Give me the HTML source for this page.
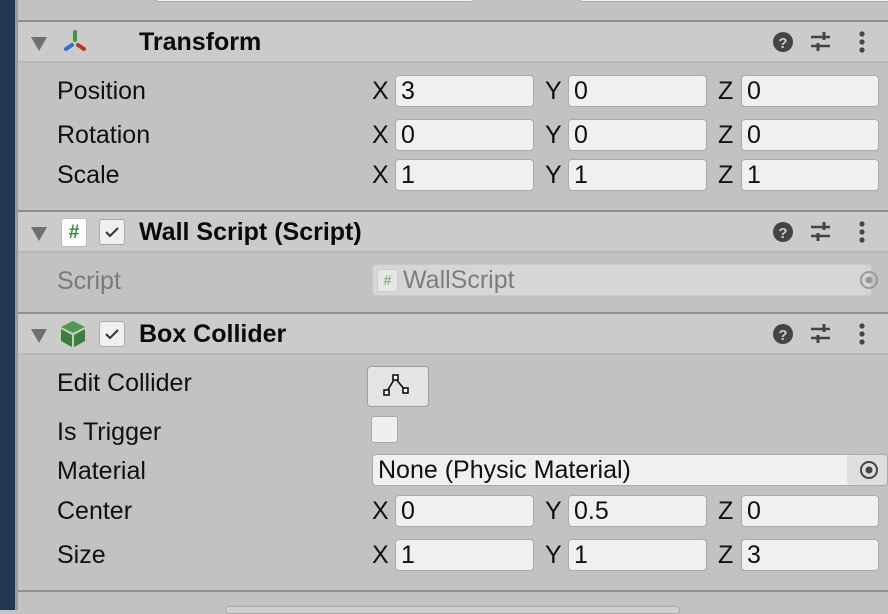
<!DOCTYPE html>
<html><head><meta charset="utf-8"><style>
*{margin:0;padding:0;box-sizing:border-box}
body{width:888px;height:610px;overflow:hidden;background:#c2c2c2;font-family:"Liberation Sans",sans-serif;position:relative;color:#101010}
.a{position:absolute}
.strip{left:0;top:0;width:15px;height:610px;background:#233750}
.edge{left:15px;top:0;width:3px;height:610px;background:#9a9a9a}
.sep{left:18px;width:870px;height:2px;background:#8e8e8e}
.hdr{left:18px;width:870px;height:41px;background:#cbcbcb;border-bottom:2px solid #b7b7b7}
.tri{width:0;height:0;border-left:8px solid transparent;border-right:8px solid transparent;border-top:14px solid #707070}
.ht{font-weight:bold;font-size:25px;color:#0a0a0a}
.lbl{font-size:25px;left:57px}
.ax{font-size:25px}
.f{background:#f0f0f0;border:1px solid #aaa;border-radius:4px;height:32px;font-size:25px;padding:1px 0 0 5px;line-height:29px}
.cb{width:26px;height:26px;background:#efefef;border:1px solid #a9a9a9;border-radius:3px}
</style></head><body>
<div class="a strip"></div><div class="a edge"></div>
<div class="a f" style="left:155px;top:-30px;width:320px"></div>
<div class="a f" style="left:578px;top:-30px;width:320px"></div>
<div class="a sep" style="top:20px"></div>

<div class="a hdr" style="top:22px"></div>
<div class="a tri" style="left:31px;top:37px"></div>
<svg class="a" style="left:60px;top:28px" width="30" height="26"><line x1="15" y1="4" x2="15" y2="12" stroke="#3c9a3c" stroke-width="4" stroke-linecap="round"/><line x1="6" y1="21" x2="12" y2="17" stroke="#2f6fd0" stroke-width="4" stroke-linecap="round"/><line x1="24" y1="21" x2="18" y2="17" stroke="#c2322a" stroke-width="4" stroke-linecap="round"/></svg>
<div class="a ht" style="left:139px;top:28px">Transform</div>

<div class="a lbl" style="top:77px">Position</div>
<div class="a lbl" style="top:121px">Rotation</div>
<div class="a lbl" style="top:161px">Scale</div>

<div class="a sep" style="top:210px"></div>
<div class="a hdr" style="top:212px"></div>
<div class="a tri" style="left:31px;top:227px"></div>
<div class="a" style="left:61px;top:218px;width:26px;height:29px;background:#fff;border:1px solid #bbb;border-radius:3px;color:#3a8a3a;font-weight:bold;font-size:19px;text-align:center;line-height:27px">#</div>
<div class="a cb" style="left:99px;top:219px"></div>
<svg class="a" style="left:99px;top:219px" width="26" height="26"><polyline points="7,13 11,17 19,9" fill="none" stroke="#333" stroke-width="2"/></svg>
<div class="a ht" style="left:139px;top:218px">Wall Script (Script)</div>
<div class="a lbl" style="top:267px;color:#7a7a7a">Script</div>
<div class="a f" style="left:372px;top:264px;width:500px;background:#d6d6d6;border-color:#c8c8c8;color:#7d7d7d;padding-left:30px">WallScript</div>
<div class="a" style="left:377px;top:269px;width:21px;height:23px;background:#e6e6e6;border:1px solid #ccc;border-radius:2px;color:#6fa26f;font-size:14px;text-align:center;line-height:21px">#</div>
<svg class="a" style="left:859px;top:270px" width="20" height="20"><circle cx="10" cy="10" r="8" fill="none" stroke="#999" stroke-width="2"/><circle cx="10" cy="10" r="3.5" fill="#999"/></svg>

<div class="a sep" style="top:312px"></div>
<div class="a hdr" style="top:314px"></div>
<div class="a tri" style="left:31px;top:329px"></div>
<svg class="a" style="left:59px;top:319px" width="28" height="30"><polygon points="14,2 26,8 14,14 2,8" fill="#4f9a4f"/><polygon points="2,10 13,16 13,28 2,22" fill="#3e7d3e"/><polygon points="15,16 26,10 26,22 15,28" fill="#3e7d3e"/></svg>
<div class="a cb" style="left:99px;top:321px"></div>
<svg class="a" style="left:99px;top:321px" width="26" height="26"><polyline points="7,13 11,17 19,9" fill="none" stroke="#333" stroke-width="2"/></svg>
<div class="a ht" style="left:139px;top:320px">Box Collider</div>

<div class="a lbl" style="top:369px">Edit Collider</div>
<div class="a" style="left:367px;top:366px;width:62px;height:41px;background:#e4e4e4;border:1px solid #9e9e9e;border-radius:4px"></div>
<svg class="a" style="left:383px;top:373px" width="30" height="26"><polyline points="3,20 12,5 22,17" fill="none" stroke="#111" stroke-width="1.6"/><rect x="1" y="17" width="5" height="5" fill="#fff" stroke="#111" stroke-width="1.6"/><rect x="10" y="2" width="5" height="5" fill="#fff" stroke="#111" stroke-width="1.6"/><rect x="20" y="15" width="5" height="5" fill="#fff" stroke="#111" stroke-width="1.6"/></svg>
<div class="a lbl" style="top:418px">Is Trigger</div>
<div class="a cb" style="left:371px;top:416px;width:27px;height:27px"></div>
<div class="a lbl" style="top:457px">Material</div>
<div class="a f" style="left:372px;top:454px;width:516px">None (Physic Material)</div>
<div class="a" style="left:847px;top:455px;width:40px;height:30px;background:#dedede;border-radius:3px"></div>
<svg class="a" style="left:859px;top:460px" width="20" height="20"><circle cx="10" cy="10" r="8" fill="none" stroke="#444" stroke-width="2"/><circle cx="10" cy="10" r="3.5" fill="#444"/></svg>
<div class="a lbl" style="top:497px">Center</div>
<div class="a lbl" style="top:541px">Size</div>

<div class="a sep" style="top:590px"></div>
<div class="a" style="left:225px;top:606px;width:455px;height:8px;background:#d0d0d0;border:1px solid #aaa;border-radius:4px"></div>

<svg class="a" style="left:770px;top:30px" width="105" height="24"><circle cx="13" cy="12" r="10" fill="#444"/><text x="13" y="18" font-family="Liberation Sans" font-weight="bold" font-size="15" fill="#cbcbcb" text-anchor="middle">?</text><g stroke="#444" stroke-width="2.5"><line x1="41" y1="7" x2="60" y2="7"/><line x1="41" y1="16" x2="60" y2="16"/></g><g stroke="#444" stroke-width="3"><line x1="54" y1="2" x2="54" y2="10"/><line x1="48" y1="13" x2="48" y2="21"/></g><circle cx="92" cy="4" r="2.6" fill="#444"/><circle cx="92" cy="12" r="2.6" fill="#444"/><circle cx="92" cy="20" r="2.6" fill="#444"/></svg>
<svg class="a" style="left:770px;top:220px" width="105" height="24"><circle cx="13" cy="12" r="10" fill="#444"/><text x="13" y="18" font-family="Liberation Sans" font-weight="bold" font-size="15" fill="#cbcbcb" text-anchor="middle">?</text><g stroke="#444" stroke-width="2.5"><line x1="41" y1="7" x2="60" y2="7"/><line x1="41" y1="16" x2="60" y2="16"/></g><g stroke="#444" stroke-width="3"><line x1="54" y1="2" x2="54" y2="10"/><line x1="48" y1="13" x2="48" y2="21"/></g><circle cx="92" cy="4" r="2.6" fill="#444"/><circle cx="92" cy="12" r="2.6" fill="#444"/><circle cx="92" cy="20" r="2.6" fill="#444"/></svg>
<svg class="a" style="left:770px;top:322px" width="105" height="24"><circle cx="13" cy="12" r="10" fill="#444"/><text x="13" y="18" font-family="Liberation Sans" font-weight="bold" font-size="15" fill="#cbcbcb" text-anchor="middle">?</text><g stroke="#444" stroke-width="2.5"><line x1="41" y1="7" x2="60" y2="7"/><line x1="41" y1="16" x2="60" y2="16"/></g><g stroke="#444" stroke-width="3"><line x1="54" y1="2" x2="54" y2="10"/><line x1="48" y1="13" x2="48" y2="21"/></g><circle cx="92" cy="4" r="2.6" fill="#444"/><circle cx="92" cy="12" r="2.6" fill="#444"/><circle cx="92" cy="20" r="2.6" fill="#444"/></svg>

<div id="v"></div>
<script>
var rows=[[75,'3','0','0'],[119,'0','0','0'],[159,'1','1','1'],[495,'0','0.5','0'],[539,'1','1','3']];
var h='';rows.forEach(function(r){var t=r[0];
[['X',372,395,r[1]],['Y',545,568,r[2]],['Z',718,741,r[3]]].forEach(function(c){
h+='<div class="a ax" style="left:'+c[1]+'px;top:'+(t+2)+'px">'+c[0]+'</div>';
h+='<div class="a f" style="left:'+c[2]+'px;top:'+t+'px;width:'+(c[0]=='Z'?138:139)+'px">'+c[3]+'</div>';});});
document.getElementById('v').innerHTML=h;
</script>
</body></html>
